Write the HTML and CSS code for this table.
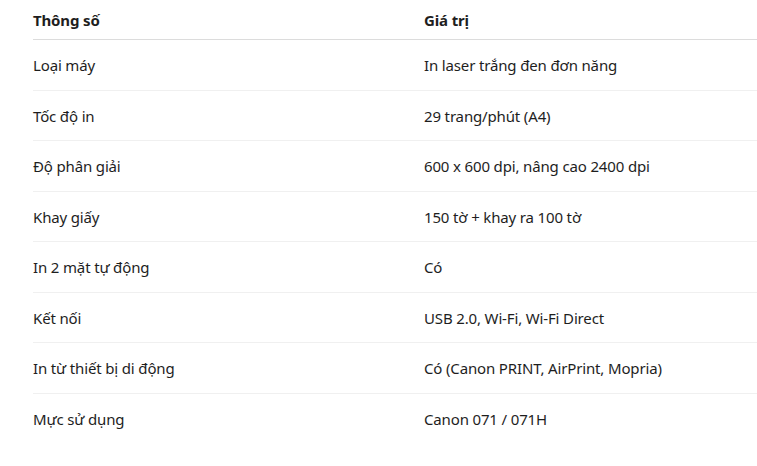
FILE: index.html
```html
<!DOCTYPE html>
<html lang="vi">
<head>
<meta charset="utf-8">
<link rel="stylesheet" href="styles.css">
</head>
<body>
<div class="wrap">
<table class="specs">
<colgroup><col class="c1"><col class="c2"></colgroup>
<thead>
<tr><th>Thông số</th><th>Giá trị</th></tr>
</thead>
<tbody>
<tr><td>Loại máy</td><td>In laser trắng đen đơn năng</td></tr>
<tr><td>Tốc độ in</td><td>29 trang/phút (A4)</td></tr>
<tr><td>Độ phân giải</td><td>600 x 600 dpi, nâng cao 2400 dpi</td></tr>
<tr><td>Khay giấy</td><td>150 tờ + khay ra 100 tờ</td></tr>
<tr><td>In 2 mặt tự động</td><td>Có</td></tr>
<tr><td>Kết nối</td><td>USB 2.0, Wi-Fi, Wi-Fi Direct</td></tr>
<tr><td>In từ thiết bị di động</td><td>Có (Canon PRINT, AirPrint, Mopria)</td></tr>
<tr><td>Mực sử dụng</td><td>Canon 071 / 071H</td></tr>
</tbody>
</table>
</div>
</body>
</html>
```
FILE: styles.css
```css
html, body {
  margin: 0;
  padding: 0;
  background: #ffffff;
  overflow: hidden;
}
.wrap {
  padding-left: 33px;
}
.specs {
  width: 100%;
  border-collapse: collapse;
  table-layout: fixed;
  font-family: "Noto Sans", "Open Sans", sans-serif;
  font-size: 15px;
  letter-spacing: -0.15px;
  color: #1e1e1e;
}
.specs .c1 {
  width: 391px;
}
.specs th {
  text-align: left;
  font-weight: 700;
  padding: 9px 0 8px;
  line-height: 22px;
  border-bottom: 1px solid #dcdcdc;
}
.specs td {
  text-align: left;
  padding: 15px 0 13px;
  line-height: 21.5px;
  border-bottom: 1px solid #f0f0f0;
}
.specs tbody tr:last-child td {
  border-bottom: none;
}
```
